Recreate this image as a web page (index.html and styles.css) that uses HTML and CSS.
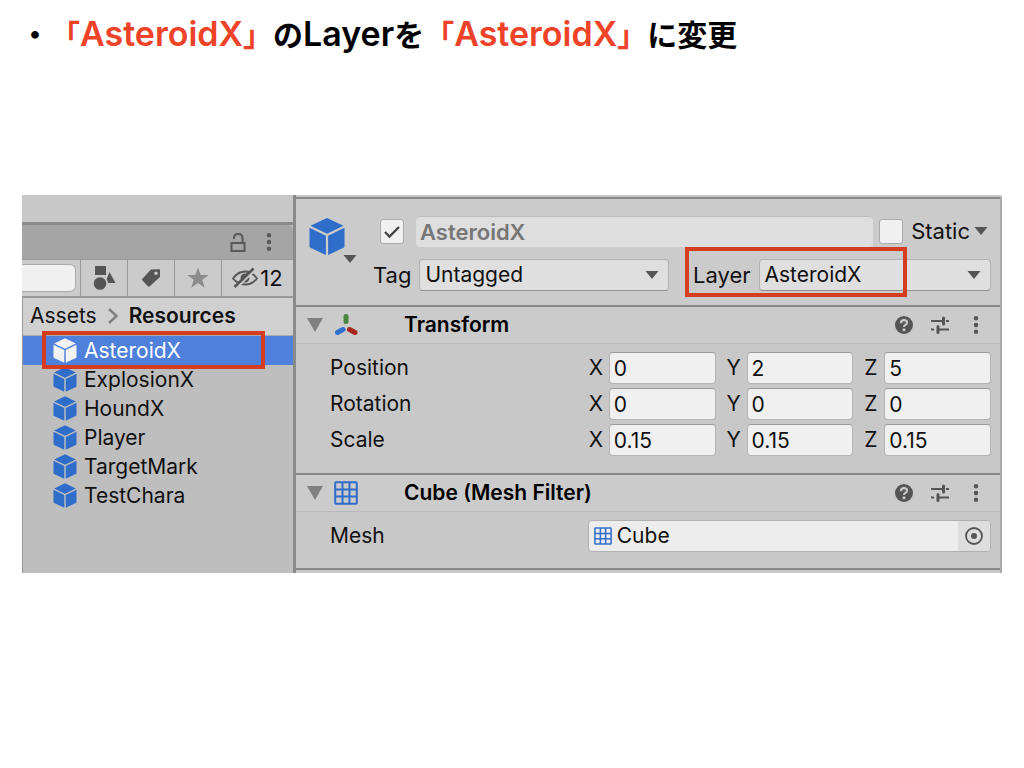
FILE: index.html
```html
<!DOCTYPE html>
<html lang="ja">
<head>
<meta charset="utf-8">
<title>AsteroidX Layer</title>
<link rel="stylesheet" href="styles.css">
</head>
<body>
<svg class="defs" aria-hidden="true">
  <symbol id="cube" viewBox="0 0 36 38">
    <path d="M18 0.5 34.500 8.200 18 16.300 1.500 8.200Z"/>
    <path d="M0.500 10.200 16.900 18.300V37.500L1.500 30.300Q.5 29.800.5 28.800Z"/>
    <path d="M35.500 10.200 19.100 18.300V37.500L34.500 30.300Q35.500 29.800 35.500 28.800Z"/>
  </symbol>
  <symbol id="down" viewBox="0 0 14 8"><path d="M0.500 0H13.500L7 8Z"/></symbol>
  <symbol id="fold" viewBox="0 0 16 14"><path d="M0 0H16L8 14Z"/></symbol>
  <symbol id="dots" viewBox="0 0 6 18"><circle cx="3" cy="2.200" r="2.200"/><circle cx="3" cy="9" r="2.200"/><circle cx="3" cy="15.800" r="2.200"/></symbol>
  <symbol id="grid" viewBox="0 0 24 24"><path d="M2 1.200H22Q22.800 1.200 22.800 2V22Q22.800 22.800 22 22.800H2Q1.200 22.800 1.200 22V2Q1.200 1.200 2 1.200ZM8.500 1V23M15.500 1V23M1 8.500H23M1 15.500H23" fill="none" stroke="currentColor" stroke-width="2"/></symbol>
  <symbol id="help" viewBox="0 0 18 18"><circle cx="9" cy="9" r="9"/><path d="M6 7.200Q6 4.200 9 4.200Q12 4.200 12 6.700Q12 8 10.400 8.900Q9 9.700 9 11" fill="none" stroke="#cbcbcb" stroke-width="2.200"/><circle cx="9" cy="13.800" r="1.500" fill="#cbcbcb"/></symbol>
  <symbol id="preset" viewBox="0 0 18 18"><path d="M0 5H11M15 5H18M0 13.500H3M6 13.500H18" fill="none" stroke="currentColor" stroke-width="1.800"/><path d="M12.500 2V8M7 10.500V16.500" fill="none" stroke="currentColor" stroke-width="3" stroke-linecap="round"/></symbol>
</svg>

<main class="slide">
  <h1 class="title">・<em>「<span class="latin">AsteroidX</span>」</em>の<span class="latin">Layer</span>を<em>「<span class="latin">AsteroidX</span>」</em>に変更</h1>

  <div class="editor">
    <section class="project" aria-label="Project">
      <div class="strip"></div>
      <div class="tabs">
        <button class="icon-button" aria-label="Lock"><svg class="line" width="16" height="19" viewBox="0 0 16 19" stroke-width="2"><path d="M1.500 10H14.500V18H1.500Z"/><path d="M4 6V5Q4 1 8 1Q12.500 1 12.500 5V10"/></svg></button>
        <button class="icon-button" aria-label="More"><svg width="6" height="18"><use href="#dots"/></svg></button>
      </div>
      <div class="tools">
        <div class="search-cell"><input class="search" type="text" aria-label="Search"></div>
        <button class="tool" aria-label="Type"><svg width="24" height="26" viewBox="0 0 24 26"><path d="M3 1H14V10H3Z"/><path d="M17.500 7 23.500 18H13Z"/><circle cx="8.500" cy="18.500" r="7.500" fill="#cbcbcb"/><circle cx="8" cy="18.500" r="6.300"/></svg></button>
        <button class="tool" aria-label="Label"><svg width="20" height="20" viewBox="0 0 20 20"><path fill-rule="evenodd" d="M10 1.500 18 1.200Q19 1.200 19 2V9L8.500 18.500Q7.800 19 7.200 18.400L1.200 12.200Q.6 11.500 1.200 10.900ZM15 3.500A1.700 1.700 0 1 0 15 7A1.700 1.700 0 1 0 15 3.500Z"/></svg></button>
        <button class="tool faint" aria-label="Favorite"><svg width="22" height="22" viewBox="0 0 22 22"><path d="M11 0.500 13.700 8H21.700L15.300 12.700 17.700 20.700 11 16 4.300 20.700 6.700 12.700 0.300 8H8.300Z"/></svg></button>
        <button class="tool hidden-count" aria-label="Hidden 12"><svg class="line" width="26" height="22" viewBox="0 0 26 22"><path d="M1 11.500Q6 4.500 13 4.500Q20 4.500 25 11.500Q20 17.500 13 17.500Q6 17.500 1 11.500Z" stroke-width="1.800"/><circle cx="13" cy="11" r="4.500" fill="currentColor" stroke="none"/><path d="M4.500 21 23.500 2.500" stroke="#cbcbcb" stroke-width="2"/><path d="M2.500 20 21.500 1.500" stroke-width="2.600"/></svg>12</button>
      </div>
      <nav class="crumbs"><a href="#assets">Assets</a><svg class="line chevron" width="10" height="16" viewBox="0 0 10 16" stroke-width="2.400"><path d="M1 1 8.500 8 1 15"/></svg><a class="current" href="#resources">Resources</a></nav>
      <ul class="files">
        <li class="selected"><svg class="cube"><use href="#cube"/></svg>AsteroidX<span class="marker"></span></li>
        <li><svg class="cube"><use href="#cube"/></svg>ExplosionX</li>
        <li><svg class="cube"><use href="#cube"/></svg>HoundX</li>
        <li><svg class="cube"><use href="#cube"/></svg>Player</li>
        <li><svg class="cube"><use href="#cube"/></svg>TargetMark</li>
        <li><svg class="cube"><use href="#cube"/></svg>TestChara</li>
      </ul>
    </section>

    <section class="inspector" aria-label="Inspector">
      <header class="object">
        <button class="object-icon" aria-label="Object icon"><svg width="36" height="39" class="blue"><use href="#cube"/></svg><svg class="corner" width="14" height="8"><use href="#down"/></svg></button>
        <div class="object-rows">
          <div class="name-row">
            <input class="check" type="checkbox" checked aria-label="Active">
            <input class="name" type="text" value="AsteroidX" aria-label="Name">
            <label class="static"><input class="check" type="checkbox">Static</label>
            <svg class="static-arrow" width="14" height="8"><use href="#down"/></svg>
          </div>
          <div class="tag-row">
            <label class="choice tag"><span>Tag</span><span class="drop"><select><option>Untagged</option></select><svg width="14" height="8"><use href="#down"/></svg></span></label>
            <label class="choice layer"><span>Layer</span><span class="drop"><select><option>AsteroidX</option></select><svg width="14" height="8"><use href="#down"/></svg></span><span class="marker"></span></label>
          </div>
        </div>
      </header>

      <section class="component">
        <header class="bar">
          <button class="icon-button fold" aria-label="Collapse"><svg width="16" height="14"><use href="#fold"/></svg></button>
          <svg class="kind" width="24" height="24" viewBox="0 0 24 24" stroke-width="5" stroke-linecap="round"><path d="M12 3.500V8.500" stroke="#4a8540"/><path d="M3.500 19.500 9 16.500" stroke="#2f6fce"/><path d="M15.500 16.500 21 19.500" stroke="#a8261c"/></svg>
          <h2>Transform</h2>
          <button class="icon-button" aria-label="Help"><svg width="18" height="18"><use href="#help"/></svg></button>
          <button class="icon-button" aria-label="Presets"><svg width="18" height="18"><use href="#preset"/></svg></button>
          <button class="icon-button more" aria-label="More"><svg width="6" height="18"><use href="#dots"/></svg></button>
        </header>
        <div class="body">
          <div class="row"><span>Position</span><div class="axes"><label>X<input type="text" value="0"></label><label>Y<input type="text" value="2"></label><label>Z<input type="text" value="5"></label></div></div>
          <div class="row"><span>Rotation</span><div class="axes"><label>X<input type="text" value="0"></label><label>Y<input type="text" value="0"></label><label>Z<input type="text" value="0"></label></div></div>
          <div class="row"><span>Scale</span><div class="axes"><label>X<input type="text" value="0.15"></label><label>Y<input type="text" value="0.15"></label><label>Z<input type="text" value="0.15"></label></div></div>
        </div>
      </section>

      <section class="component">
        <header class="bar">
          <button class="icon-button fold" aria-label="Collapse"><svg width="16" height="14"><use href="#fold"/></svg></button>
          <svg class="kind blue" width="24" height="24"><use href="#grid"/></svg>
          <h2>Cube (Mesh Filter)</h2>
          <button class="icon-button" aria-label="Help"><svg width="18" height="18"><use href="#help"/></svg></button>
          <button class="icon-button" aria-label="Presets"><svg width="18" height="18"><use href="#preset"/></svg></button>
          <button class="icon-button more" aria-label="More"><svg width="6" height="18"><use href="#dots"/></svg></button>
        </header>
        <div class="body mesh">
          <div class="row"><label for="mesh">Mesh</label><div class="object-field"><svg class="blue" width="18" height="18"><use href="#grid"/></svg><input id="mesh" type="text" value="Cube"><button class="pick" aria-label="Select mesh"><svg width="18" height="18" viewBox="0 0 18 18"><circle cx="9" cy="9" r="8" fill="none" stroke="currentColor" stroke-width="1.800"/><circle cx="9" cy="9" r="3"/></svg></button></div></div>
        </div>
      </section>
    </section>
  </div>
</main>
</body>
</html>
```

FILE: styles.css
```css
* { box-sizing: border-box; }
body { margin: 0; background: #fff; color: #111; font: 21px/28px Inter, "Noto Sans CJK JP", sans-serif; }
button, input, select { font: inherit; color: inherit; margin: 0; }
button { border: 0; padding: 0; background: none; color: #555; }
svg { display: block; flex: none; fill: currentColor; }
.line { fill: none; stroke: currentColor; }
a { color: inherit; text-decoration: none; }
.defs { position: absolute; width: 0; height: 0; }
.blue { color: #2f6dca; }

.slide { padding: 11px 22px 0 20px; }
.title { margin: 0 0 139px; font: 700 30px/44px "Noto Sans CJK JP", sans-serif; text-spacing-trim: space-all; color: #000; }
.title em { font-style: normal; color: #ee4328; }
.latin { font-family: Inter, sans-serif; font-weight: 600; font-size: 34px; }

.editor { display: grid; grid-template-columns: 274fr 706fr; margin-left: 2px; background: #c8c8c8; }
.project { display: flex; flex-direction: column; min-width: 0; background: #bebebe; border-right: 3px solid #8a8a8a; }
.strip { height: 30px; background: #c8c8c8; border-bottom: 3px solid #8a8a8a; }
.tabs { display: flex; justify-content: flex-end; align-items: center; gap: 20px; height: 35px; padding-right: 21px; background: #a5a5a5; border-bottom: 1px solid #999; border-top-right-radius: 5px; }
.tabs .icon-button { color: #585858; }
.tools { display: flex; height: 38px; background: #cbcbcb; border-bottom: 2px solid #999; }
.search-cell { flex: 1; display: flex; align-items: center; min-width: 0; padding-right: 4px; }
.search { width: 100%; height: 28px; background: #f0f0f0; border: 1px solid #aaa; border-left: 0; border-radius: 0 6px 6px 0; }
.tool { flex: none; width: 47px; display: flex; align-items: center; justify-content: center; border-left: 1px solid #999; }
.faint { color: #8c8c8c; }
.hidden-count { width: 72px; gap: 2px; font-size: 22px; color: #111; }
.hidden-count svg { color: #555; }
.crumbs { display: flex; align-items: center; gap: 11px; height: 38px; padding: 0 0 2px 7px; background: #d0d0d0; border-left: 1px solid #999; border-bottom: 1px solid #aaa; }
.chevron { color: #808080; }
.current { font-weight: 600; }
.files { flex: 1; margin: 0; padding: 0; list-style: none; border-left: 1px solid #999; }
.files li { position: relative; display: flex; align-items: center; gap: 7px; height: 29px; padding-left: 30px; }
.files .selected { background: #4f80db; color: #fff; }
.cube { width: 24px; height: 25px; color: #2f6dca; }
.selected .cube { color: #f2f2f2; }
.marker { position: absolute; border: 4px solid #d63c20; pointer-events: none; z-index: 1; }
.selected .marker { inset: -5px 28px -4px 19px; }

.inspector { min-width: 0; margin-top: 2px; padding-bottom: 3px; border-right: 2px solid #aaa; }
.object { display: flex; gap: 31px; height: 108px; padding: 16px 9px 0 13px; background: #cbcbcb; border-top: 2px solid #888; }
.object-icon { position: relative; align-self: flex-start; padding-top: 2px; }
.corner { position: absolute; right: -12px; bottom: -7px; }
.object-rows { flex: 1; min-width: 0; display: flex; flex-direction: column; gap: 12px; }
.name-row { display: flex; align-items: center; height: 32px; }
.check { appearance: none; flex: none; width: 24px; height: 25px; margin-left: 4px; background: #f0f0f0; border: 1px solid #aaa; border-radius: 3px; }
.check:checked { background: #f0f0f0 url("data:image/svg+xml,%3Csvg xmlns='http://www.w3.org/2000/svg' viewBox='0 0 22 22'%3E%3Cpath d='M4 11l4.500 4.500L18 6' fill='none' stroke='%23444' stroke-width='2.400'/%3E%3C/svg%3E") center / 22px; }
.name { flex: 1; min-width: 0; height: 31px; margin: 0 2px 0 12px; padding: 0 4px; border: 0; border-top: 1px solid #bbb; border-radius: 4px; background: #dedede; color: #777; font-size: 22px; font-weight: 600; }
.static { display: flex; align-items: center; gap: 8px; font-size: 22px; }
.static-arrow { margin: 0 3px 0 4px; color: #555; }
.tag-row { display: grid; grid-template-columns: 296fr 306fr; gap: 16px; margin-left: -3px; }
.choice { position: relative; display: flex; align-items: center; gap: 8px; font-size: 22px; }
.layer { padding-left: 8px; }
.drop { flex: 1; position: relative; display: flex; align-items: center; min-width: 0; }
.drop svg { position: absolute; right: 10px; color: #555; pointer-events: none; }
select { appearance: none; width: 100%; height: 32px; padding: 0 5px; border: 1px solid #b2b2b2; border-bottom-color: #909090; border-radius: 4px; background: #dfdfdf; font-size: 21px; }
.layer .marker { inset: -12px 84px -6px 0; }

.bar { display: flex; align-items: center; height: 39px; padding: 0 21px 0 11px; background: #cbcbcb; border-top: 2px solid #888; border-bottom: 1px solid #b8b8b8; }
.fold { color: #808080; }
.kind { margin: 0 46px 0 11px; }
h2 { flex: 1; margin: 0; font-size: 21px; line-height: 28px; font-weight: 600; color: #000; }
.bar .icon-button + .icon-button { margin-left: 18px; }
.bar .icon-button + .more { margin-left: 24px; }
.body { display: flex; flex-direction: column; gap: 4px; padding: 8px 9px 17px 34px; }
.row { display: grid; grid-template-columns: 39% 1fr; align-items: center; }
.axes { display: grid; grid-template-columns: repeat(3, 1fr); gap: 11px; padding-left: 1px; }
.axes label { display: grid; grid-template-columns: 20px 1fr; align-items: center; }
.axes input { width: 100%; min-width: 0; height: 32px; padding: 0 4px; background: #f0f0f0; border: 1px solid #b4b4b4; border-top-color: #999; border-radius: 4px; }
.mesh { padding-bottom: 16px; border-bottom: 2px solid #888; }
.object-field { display: flex; align-items: center; gap: 5px; height: 32px; padding-left: 5px; background: #ededed; border: 1px solid #b0b0b0; border-radius: 4px; overflow: hidden; }
.object-field input { flex: 1; min-width: 0; border: 0; padding: 0; background: none; }
.pick { width: 32px; height: 100%; display: flex; align-items: center; justify-content: center; background: #dedede; }
```
